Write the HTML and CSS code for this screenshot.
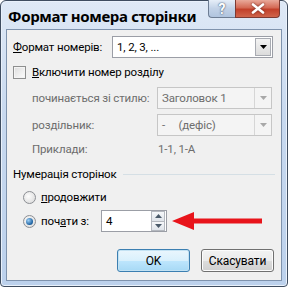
FILE: index.html
```html
<!DOCTYPE html>
<html>
<head>
<meta charset="utf-8">
<link rel="stylesheet" href="styles.css">
</head>
<body>
<div class="window">
  <div class="titlebar">
    <span class="title">Формат номера сторінки</span>
    <div class="caption-buttons">
      <div class="cap-btn help">?</div>
      <div class="cap-btn close">
        <svg width="14" height="11" viewBox="0 0 14 11"><path d="M2 1.5 L12 9.5 M12 1.5 L2 9.5" stroke="#fff" stroke-width="2.6" stroke-linecap="round"/></svg>
      </div>
    </div>
  </div>
  <div class="client">
    <div class="row format-row">
      <span class="label"><u>Ф</u>ормат номерів:</span>
      <div class="select main-select">
        <span class="select-text">1, 2, 3, ...</span>
        <div class="drop"><svg width="7" height="4" viewBox="0 0 7 4"><path d="M0 0h7L3.5 4z" fill="#000"/></svg></div>
      </div>
    </div>
    <div class="row check-row">
      <span class="checkbox"></span>
      <span><u>В</u>ключити номер розділу</span>
    </div>
    <div class="sub-grid">
      <span class="dim">починається зі стилю:</span>
      <div class="select disabled">
        <span class="select-text">Заголовок 1</span>
        <div class="drop"><svg width="7" height="4" viewBox="0 0 7 4"><path d="M0 0h7L3.5 4z" fill="#a8a8a8"/></svg></div>
      </div>
      <span class="dim">роздільник:</span>
      <div class="select disabled">
        <span class="select-text">-&nbsp;&nbsp;&nbsp;&nbsp;&nbsp;(дефіс)</span>
        <div class="drop"><svg width="7" height="4" viewBox="0 0 7 4"><path d="M0 0h7L3.5 4z" fill="#a8a8a8"/></svg></div>
      </div>
      <span class="dim">Приклади:</span>
      <span class="dim ex">1-1, 1-A</span>
    </div>
    <div class="group-head">
      <span>Нумерація сторінок</span>
      <span class="line"></span>
    </div>
    <div class="row radio-row">
      <span class="radio"></span>
      <span><u>п</u>родовжити</span>
    </div>
    <div class="row radio-row start-row">
      <span class="radio checked"></span>
      <span class="start-label">поч<u>а</u>ти з:</span>
      <div class="spin">
        <span class="spin-text">4</span>
        <div class="spin-btns">
          <div class="sb"><svg width="7" height="4" viewBox="0 0 7 4"><path d="M0 4h7L3.5 0z" fill="#4a5a6a"/></svg></div>
          <div class="sb"><svg width="7" height="4" viewBox="0 0 7 4"><path d="M0 0h7L3.5 4z" fill="#4a5a6a"/></svg></div>
        </div>
      </div>
      <svg class="arrow" width="92" height="20" viewBox="0 0 92 20"><path d="M0 10 L22 1 L22 7.5 L90 7.5 L90 12.5 L22 12.5 L22 19 Z" fill="#e8141b"/></svg>
    </div>
    <div class="buttons">
      <div class="btn default">OK</div>
      <div class="btn">Скасувати</div>
    </div>
  </div>
</div>
</body>
</html>
```

FILE: styles.css
```css
html, body {
  margin: 0;
  padding: 0;
  width: 288px;
  height: 287px;
  overflow: hidden;
  background: #fff;
}
body {
  font-family: Roboto, "Liberation Sans", sans-serif;
  font-size: 11.5px;
  letter-spacing: -0.15px;
  color: #000;
  white-space: nowrap;
}
u { text-decoration: underline; text-underline-offset: 1px; }
.window {
  box-sizing: border-box;
  width: 288px;
  height: 287px;
  border: 1px solid #3f4d60;
  border-radius: 6px 6px 4px 4px;
  background: linear-gradient(#dfe9f6 0%, #c8d9ef 40%, #bcd1ec 100%);
  box-shadow: inset 0 0 0 1px #e9f1fb;
  padding: 0 5px 5px;
  display: flex;
  flex-direction: column;
}
.titlebar {
  height: 28px;
  display: flex;
  align-items: flex-start;
  flex-shrink: 0;
}
.title {
  font-family: "Noto Sans", "Open Sans", sans-serif;
  font-weight: bold;
  font-size: 15px;
  margin-top: 5px;
  margin-left: 2px;
  letter-spacing: -0.35px;
}
.caption-buttons {
  margin-left: auto;
  margin-right: 2px;
  display: flex;
  margin-top: -1px;
}
.cap-btn {
  height: 18px;
  box-sizing: border-box;
  display: flex;
  align-items: center;
  justify-content: center;
  border: 1px solid #6d7d93;
  border-top: none;
}
.help {
  width: 27px;
  border-radius: 0 0 0 4px;
  background: linear-gradient(#e6eef8, #c2d2e7 50%, #b0c4de);
  color: #fff;
  font-weight: bold;
  font-size: 14px;
  text-shadow: 0 0 2px #4a5e7a, 0 0 1px #4a5e7a;
  border-right: none;
}
.close {
  width: 45px;
  border-radius: 0 0 4px 0;
  background: linear-gradient(#e9a99a, #d46a55 45%, #c2402a 55%, #d0654c);
  border-color: #7d3a32;
}
.close svg { filter: drop-shadow(0 0 1px #6b2319); }
.client {
  flex: 1;
  background: #f0f0f0;
  border: 1px solid #7f93ad;
  padding: 5px 6px 0 6px;
  display: flex;
  flex-direction: column;
}
.row {
  display: flex;
  align-items: center;
}
.format-row {
  height: 22px;
  margin-top: 1px;
}
.format-row .label { width: 99px; }
.select {
  box-sizing: border-box;
  height: 22px;
  border: 1px solid #9b9ea6;
  background: #fff;
  display: flex;
  align-items: center;
}
.main-select { width: 161px; }
.select-text { padding-left: 4px; flex: 1; white-space: pre; }
.drop {
  width: 16px;
  height: 18px;
  margin-right: 1px;
  box-sizing: border-box;
  border: 1px solid #a8abb2;
  background: linear-gradient(#f4f4f4, #dcdcdc);
  display: flex;
  align-items: center;
  justify-content: center;
}
.check-row {
  margin-top: 6px;
  height: 16px;
}
.checkbox {
  width: 11px;
  height: 11px;
  border: 1px solid #8e8f8f;
  background: linear-gradient(135deg, #dcdcdc, #fdfdfd);
  box-shadow: inset 0 0 0 1px #f4f4f4;
  margin-right: 6px;
}
.sub-grid {
  display: grid;
  grid-template-columns: 125px 115px;
  grid-template-rows: 22px 22px 16px;
  row-gap: 5px;
  margin-left: 19px;
  margin-top: 7px;
  align-items: center;
}
.dim { color: #6d6d6d; }
.select.disabled {
  background: #f4f4f4;
  border-color: #c6c6c6;
  color: #6d6d6d;
}
.select.disabled .drop {
  background: #f4f4f4;
  border: none;
  border-left: 1px solid #d6d6d6;
  height: 20px;
  margin-right: 0;
  width: 17px;
}
.sub-grid .ex { padding-left: 1px; }
.group-head {
  display: flex;
  align-items: center;
  margin-top: 7px;
  height: 20px;
}
.group-head .line {
  flex: 1;
  height: 0;
  border-top: 1px solid #d5dfe5;
  margin-left: 6px;
}
.radio-row {
  height: 20px;
  margin-left: 10px;
  margin-top: 3px;
}
.radio {
  width: 11px;
  height: 11px;
  border-radius: 50%;
  border: 1px solid #8c8f94;
  background: radial-gradient(circle at 40% 40%, #fdfdfd, #d6d6d6);
  margin-right: 5px;
  position: relative;
}
.radio.checked::after {
  content: "";
  position: absolute;
  left: 2px;
  top: 2px;
  width: 7px;
  height: 7px;
  border-radius: 50%;
  background: radial-gradient(circle at 35% 35%, #9ed0f6, #1a5f9f 70%, #0e3e73);
}
.start-row {
  height: 22px;
  margin-top: 3px;
}
.start-label { width: 60px; }
.spin {
  box-sizing: border-box;
  width: 66px;
  height: 22px;
  border: 1px solid #9b9ea6;
  background: #fff;
  display: flex;
  align-items: center;
}
.spin-text { flex: 1; padding-left: 4px; }
.spin-btns {
  display: flex;
  flex-direction: column;
  width: 15px;
  height: 20px;
}
.sb {
  flex: 1;
  border: 1px solid #b4b8bf;
  background: linear-gradient(#f6f8fa, #dfe4ea);
  display: flex;
  align-items: center;
  justify-content: center;
  margin: 0 1px 0 0;
}
.sb + .sb { border-top: none; }
.arrow { margin-left: 5px; }
.buttons {
  display: flex;
  justify-content: flex-end;
  gap: 11px;
  margin-top: auto;
  margin-bottom: 8px;
  padding-right: 1px;
}
.btn {
  box-sizing: border-box;
  width: 73px;
  height: 23px;
  border: 1px solid #707070;
  border-radius: 3px;
  background: linear-gradient(#f2f2f2 0%, #ebebeb 50%, #dddddd 51%, #cfcfcf 100%);
  box-shadow: inset 0 0 0 1px #fcfcfc;
  display: flex;
  align-items: center;
  justify-content: center;
  font-size: 12px;
}
.btn.default {
  border-color: #3c7fb1;
  background: linear-gradient(#eaf6fd 0%, #d9f0fc 50%, #bee6fd 51%, #a7d9f5 100%);
  box-shadow: inset 0 0 0 1px #c3e2f3;
}
```
